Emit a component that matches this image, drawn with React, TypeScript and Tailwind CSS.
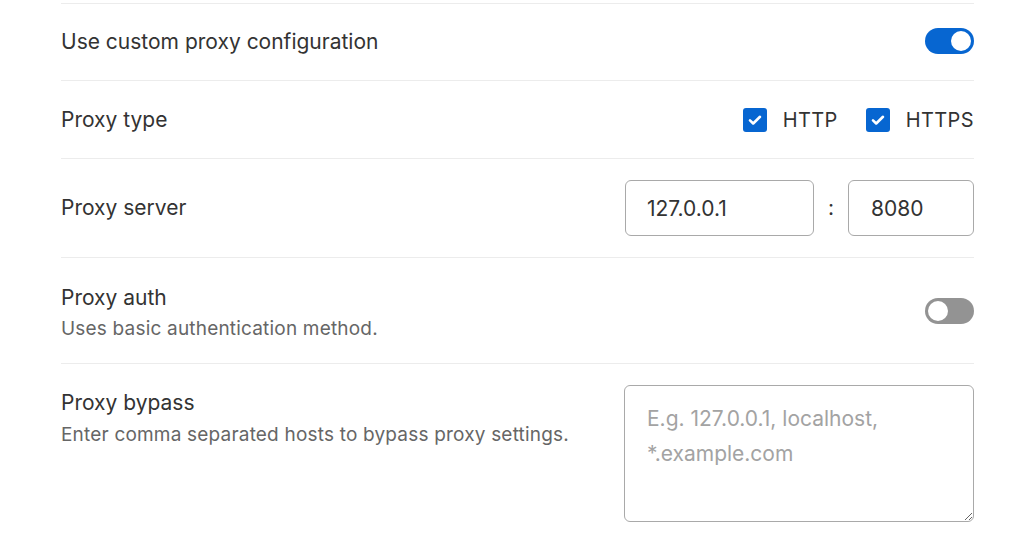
import { useState } from "react";

function Toggle({ on, onChange }: { on: boolean; onChange: () => void }) {
  return (
    <button
      type="button"
      onClick={onChange}
      className={`flex h-[26px] w-[49px] items-center rounded-full px-[3px] ${
        on ? "justify-end bg-[#0766d1]" : "justify-start bg-[#939393]"
      }`}
    >
      <span className="block h-[20px] w-[20px] rounded-full bg-white" />
    </button>
  );
}

function Check({ label, checked, onChange }: { label: string; checked: boolean; onChange: () => void }) {
  return (
    <label className="flex cursor-pointer items-center gap-[16px]" onClick={onChange}>
      <span
        className={`flex h-[24px] w-[24px] items-center justify-center rounded-[3px] ${
          checked ? "bg-[#0766d1]" : "border border-[#999] bg-white"
        }`}
      >
        {checked && (
          <svg width="16" height="16" viewBox="0 0 16 16" fill="none">
            <path d="M3 8.4l3.2 3.1L13 4.8" stroke="white" strokeWidth="2.6" strokeLinecap="round" strokeLinejoin="round" />
          </svg>
        )}
      </span>
      <span className="text-[20px] tracking-[0.02em]">{label}</span>
    </label>
  );
}

export default function App() {
  const [custom, setCustom] = useState(true);
  const [http, setHttp] = useState(true);
  const [https, setHttps] = useState(true);
  const [auth, setAuth] = useState(false);

  return (
    <div className="min-h-[558px] bg-white px-[61px] pt-[3px] font-['Inter',sans-serif] text-[#333]">
      <div className="w-[913px] border-t border-[#ececec]">
        <div className="flex h-[77px] items-center justify-between border-b border-[#ececec]">
          <span className="text-[21px]">Use custom proxy configuration</span>
          <div className="pb-[3px]">
            <Toggle on={custom} onChange={() => setCustom(!custom)} />
          </div>
        </div>

        <div className="flex h-[78px] items-center justify-between border-b border-[#ececec]">
          <span className="text-[21px]">Proxy type</span>
          <div className="flex items-center gap-[28px]">
            <Check label="HTTP" checked={http} onChange={() => setHttp(!http)} />
            <Check label="HTTPS" checked={https} onChange={() => setHttps(!https)} />
          </div>
        </div>

        <div className="flex h-[99px] items-center justify-between border-b border-[#ececec]">
          <span className="text-[21px]">Proxy server</span>
          <div className="flex items-center">
            <input
              defaultValue="127.0.0.1"
              className="h-[56px] w-[189px] rounded-[6px] border border-[#a9a9a9] px-[21px] text-[21px] text-[#333] outline-none"
            />
            <span className="w-[34px] text-center text-[21px]">:</span>
            <input
              defaultValue="8080"
              className="h-[56px] w-[126px] rounded-[6px] border border-[#a9a9a9] px-[22px] text-[21px] text-[#333] outline-none"
            />
          </div>
        </div>

        <div className="flex h-[106px] items-center justify-between border-b border-[#ececec]">
          <div className="flex flex-col pt-[7px]">
            <span className="text-[21px] leading-[30px]">Proxy auth</span>
            <span className="text-[19px] leading-[32px] tracking-[0.01em] text-[#666]">
              Uses basic authentication method.
            </span>
          </div>
          <Toggle on={auth} onChange={() => setAuth(!auth)} />
        </div>

        <div className="flex items-start justify-between pt-[21px]">
          <div className="flex flex-col pt-[3px]">
            <span className="text-[21px] leading-[30px]">Proxy bypass</span>
            <span className="text-[19px] leading-[34px] tracking-[0.01em] text-[#666]">
              Enter comma separated hosts to bypass proxy settings.
            </span>
          </div>
          <textarea
            placeholder="E.g. 127.0.0.1, localhost, *.example.com"
            className="h-[137px] w-[350px] rounded-[6px] border border-[#a9a9a9] px-[22px] py-[15px] text-[21px] leading-[35px] text-[#333] outline-none placeholder:text-[#a3a3a3]"
          />
        </div>
      </div>
    </div>
  );
}
